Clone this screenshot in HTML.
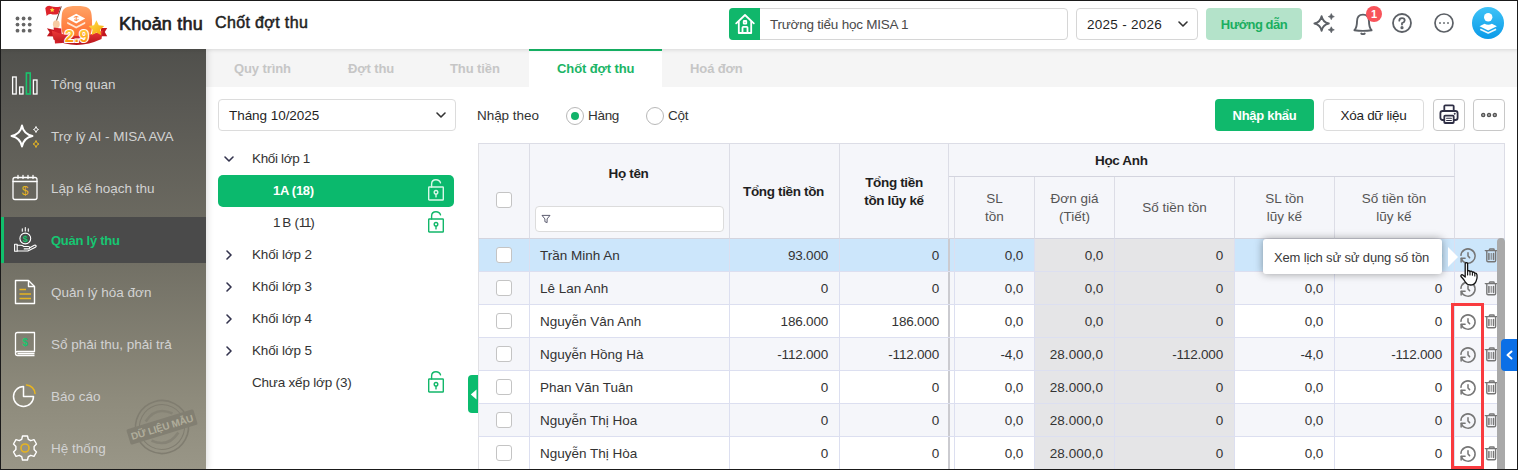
<!DOCTYPE html>
<html lang="vi">
<head>
<meta charset="utf-8">
<title>Chốt đợt thu</title>
<style>
*{box-sizing:border-box;margin:0;padding:0}
html,body{width:1518px;height:470px;overflow:hidden;background:#fff}
body{font-family:"Liberation Sans",sans-serif;font-size:13.5px;color:#1f1f1f;position:relative}
.abs{position:absolute}
#frame{position:absolute;left:0;top:0;width:1518px;height:470px;border:1px solid #1a1a1a;z-index:100;pointer-events:none}
/* header */
#hdr{position:absolute;left:0;top:0;width:1518px;height:49px;background:#fff;box-shadow:0 1px 4px rgba(0,0,0,.12);z-index:5}
#hdr .t1{position:absolute;left:119px;top:14px;font-size:18px;font-weight:400;color:#1f1f1f;letter-spacing:.2px;-webkit-text-stroke:.7px #1f1f1f}
#hdr .t2{position:absolute;left:215px;top:14px;font-size:16px;font-weight:400;color:#1f1f1f;letter-spacing:.37px;-webkit-text-stroke:.5px #1f1f1f}
.inp{position:absolute;top:8px;height:32px;border:1px solid #d6d6d6;border-radius:4px;background:#fff}
/* sidebar */
#side{position:absolute;left:0;top:49px;width:206px;height:421px;box-shadow:2px 0 6px rgba(0,0,0,.12);background:linear-gradient(180deg,#50504c 0%,#5a5954 14%,#727065 51%,#8e8b7c 83%,#999687 100%);z-index:2}
.mi{position:absolute;left:0;width:206px;height:52px;color:#d2d2d2;font-size:13.5px}
.mi span{position:absolute;left:51px;top:19px;white-space:nowrap}
.mi svg{position:absolute;left:9px;top:10px}
.mi.act{color:#16c672;font-weight:700;font-size:13px}
#actbg{position:absolute;left:0;top:168px;width:206px;height:46px;background:#4a4a4a;border-left:4px solid #10c06c}
.mi.act span{left:51px;top:19px;letter-spacing:-.25px}
.mi.act svg{left:9px}
/* tabs */
#tabs{position:absolute;left:206px;top:49px;width:1312px;height:38px;background:#f5f5f5}
#tabs .tb{position:absolute;top:12px;font-size:13px;font-weight:700;color:#c6c6c6;letter-spacing:-.1px;white-space:nowrap}
#tabs .on{position:absolute;left:323px;top:0;width:133px;height:38px;background:#fff;border-top:2px solid #17b868}
#tabs .on span{position:absolute;left:28px;top:10px;font-size:13px;font-weight:700;color:#1bb566;white-space:nowrap;letter-spacing:-.1px}
/* tree */
.tr{position:absolute;font-size:13.5px;color:#333;white-space:nowrap}
/* table */
#tbl{position:absolute;left:478px;top:143px;width:1027px;height:327px;background:#fff}
.hc{position:absolute;background:#f5f6fa;border-right:1px solid #dcdde6;border-bottom:1px solid #d3d4de;color:#555;font-size:13.5px;text-align:center;line-height:22px}
.hc b{color:#1f1f1f;letter-spacing:-.35px;font-size:13.5px}
.row{position:absolute;left:0;width:1027px;height:33px;border-bottom:1px solid #dcdff0}
.row div{position:absolute;top:0;height:32px;border-right:1px solid #dcdff0;line-height:33px;font-size:13.5px;color:#333;text-align:right;padding-right:11px;white-space:nowrap;letter-spacing:-.2px}
.row .nm{text-align:left;padding-left:10px;letter-spacing:0}
.row .g{background:#e5e5e7}
.row.alt{background:#f5f6fa}
.row.sel{background:#cce6fb}
.cb{position:absolute;left:17px;top:8px;width:16px;height:16px;border:1px solid #c4c4c4;border-radius:3px;background:#fff}
.ic{position:absolute;top:8px}
.row .fz{border-right:2px solid #cbcbd0;padding-right:9px}
.row .sp{padding:0}
.row .l8{padding-right:12px}
.row i.cb{display:block}
</style>
</head>
<body>
<!-- HEADER -->
<div id="hdr">
  <svg class="abs" style="left:15px;top:16px" width="18" height="18" viewBox="0 0 18 18" fill="#666"><circle cx="2.5" cy="2.5" r="1.9"/><circle cx="8.6" cy="2.5" r="1.9"/><circle cx="14.7" cy="2.5" r="1.9"/><circle cx="2.5" cy="8.6" r="1.9"/><circle cx="8.6" cy="8.6" r="1.9"/><circle cx="14.7" cy="8.6" r="1.9"/><circle cx="2.5" cy="14.7" r="1.9"/><circle cx="8.6" cy="14.7" r="1.9"/><circle cx="14.7" cy="14.7" r="1.9"/></svg>
  <!-- logo -->
  <svg class="abs" style="left:44px;top:3px" width="66" height="45" viewBox="0 0 66 45">
    <defs>
      <linearGradient id="lg1" x1="0" y1="0" x2="0" y2="1"><stop offset="0" stop-color="#ffa467"/><stop offset="1" stop-color="#ff6a2b"/></linearGradient>
      <linearGradient id="lg2" x1="0" y1="0" x2="0" y2="1"><stop offset="0" stop-color="#ffd84a"/><stop offset="1" stop-color="#ff8a00"/></linearGradient>
      <linearGradient id="lg3" x1="0" y1="0" x2="1" y2="1"><stop offset="0" stop-color="#ffe052"/><stop offset="1" stop-color="#f5a300"/></linearGradient>
      <linearGradient id="lg4" x1="0" y1="0" x2="0" y2="1"><stop offset="0" stop-color="#ee3a38"/><stop offset="1" stop-color="#b5141b"/></linearGradient>
    </defs>
    <path d="M2.900 25.200 L10.500 27 L10.500 33.500 L2.900 33.200 L5.600 29.200Z" fill="#c2161d"/>
    <path d="M57 25 L63.200 25 L60.800 29 L63.200 33.200 L57 33.200Z" fill="#c2161d"/>
    <path d="M32.700 2.900 C44 2.900 47 5 47.600 12 C48.400 20 48.300 26 47 30 C45.500 34 40 35.500 32.700 35.500 C25 35.500 20 34 18.500 30 C17.200 26 17 20 17.800 12 C18.400 5 21.400 2.900 32.700 2.900Z" fill="url(#lg1)"/>
    <path d="M23.200 18.800 L32.200 23.600 L41.200 18.800 L41.200 20.800 L32.200 25.600 L23.200 20.800Z" fill="#ffe6d4"/>
    <path d="M32.200 10.800 L41.200 15.600 L32.200 20.400 L23.200 15.600Z" fill="#fff"/>
    <path d="M29.800 14.400 Q32 12.800 34.400 14 M30 16.800 Q32.400 18.200 34.600 16.600 M32.200 13 V18.200" stroke="#ff7a30" stroke-width=".9" fill="none"/>
    <path d="M17.300 3.400 L12.200 18.500" stroke="#4a3326" stroke-width=".9"/>
    <path d="M1.300 5 Q3.500 2 7 3.200 Q11 4.600 16.600 3.400 L14.200 11 Q10 12 7 11 Q4.500 10.500 2.600 13Z" fill="#de242b"/>
    <path d="M8.200 4.600 l.75 1.500 1.650 .2 -1.200 1.150 .3 1.650 -1.500 -.8 -1.500 .8 .3 -1.650 -1.200 -1.150 1.650 -.2z" fill="#ffd93b"/>
    <ellipse cx="12.300" cy="21.200" rx="3.400" ry="3.900" fill="#f7cba2"/>
    <path d="M9.600 24.500 L17.200 25.600 L18.500 40 L11 40.500Z" fill="#d21f27"/>
    <path d="M7.700 27.600 Q32.700 38.500 58.800 27.600 L57.500 36 Q32.700 47.500 9.500 36.500Z" fill="url(#lg4)"/>
    <path d="M52.400 17.200 l2.350 5 5.450 .7 -4 3.800 1 5.450 -4.800 -2.650 -4.800 2.650 1 -5.450 -4 -3.800 5.450 -.7z" fill="url(#lg3)"/>
    <text x="33" y="39.200" text-anchor="middle" font-family="Liberation Sans, sans-serif" font-size="16.500" font-weight="700" fill="url(#lg2)" stroke="#fff" stroke-width="2.200" paint-order="stroke" letter-spacing=".6">2.9</text>
  </svg>
  <div class="t1">Khoản thu</div>
  <div class="t2">Chốt đợt thu</div>
  <!-- school -->
  <div class="inp" style="left:729px;width:339px"></div>
  <div class="abs" style="left:729px;top:8px;width:31px;height:32px;background:#10b76b;border-radius:4px 0 0 4px"></div>
  <svg class="abs" style="left:735px;top:13px" width="20" height="22" viewBox="0 0 20 22" fill="none" stroke="#fff" stroke-width="1.800" stroke-linejoin="round" stroke-linecap="round"><path d="M1.200 10.300 L10 2 L18.800 10.300"/><path d="M3.800 8.600 V20 H16.200 V8.600"/><path d="M7.500 20 V14.600 Q7.500 13.800 8.300 13.800 H11.700 Q12.500 13.800 12.500 14.600 V20"/><rect x="8.700" y="8" width="2.600" height="2.600" rx=".4"/></svg>
  <div class="abs" style="left:770px;top:17px;font-size:13.5px;color:#4a4a4a;letter-spacing:-.23px">Trường tiểu học MISA 1</div>
  <!-- year -->
  <div class="inp" style="left:1076px;width:122px"></div>
  <div class="abs" style="left:1087px;top:17px;font-size:13.5px;color:#1f1f1f;letter-spacing:.27px">2025 - 2026</div>
  <svg class="abs" style="left:1177px;top:19px" width="12" height="10" viewBox="0 0 12 10" fill="none" stroke="#333" stroke-width="1.6" stroke-linecap="round" stroke-linejoin="round"><path d="M2 3 L6 7 L10 3"/></svg>
  <!-- guide -->
  <div class="abs" style="left:1206px;top:8px;width:96px;height:32px;border-radius:4px;background:#b4e3ca;color:#1bae60;font-weight:700;font-size:13px;text-align:center;line-height:33px;letter-spacing:-.48px">Hướng dẫn</div>
  <!-- sparkle -->
  <svg class="abs" style="left:1312px;top:11px" width="26" height="26" viewBox="0 0 26 26" fill="none" stroke="#5c6066" stroke-width="1.900" stroke-linejoin="round"><path d="M9.600 5.300 Q10.800 11.300 16.800 12.500 Q10.800 13.700 9.600 19.700 Q8.400 13.700 2.400 12.500 Q8.400 11.300 9.600 5.300Z"/><path d="M19.300 2.600 Q19.700 5.200 22.300 5.600 Q19.700 6 19.300 8.600 Q18.900 6 16.300 5.600 Q18.900 5.200 19.300 2.600Z" fill="#5c6066" stroke-width=".7"/><path d="M19.300 15.800 Q19.700 18.400 22.300 18.800 Q19.700 19.200 19.300 21.800 Q18.900 19.200 16.300 18.800 Q18.900 18.400 19.300 15.800Z" fill="#5c6066" stroke-width=".7"/></svg>
  <!-- bell -->
  <svg class="abs" style="left:1351px;top:11px" width="24" height="26" viewBox="0 0 24 26" fill="none" stroke="#5c6066" stroke-width="1.900" stroke-linecap="round" stroke-linejoin="round"><path d="M3.400 19.200 Q6 16.500 6 10.500 Q6 3.600 12 3.600 Q18 3.600 18 10.500 Q18 16.500 20.600 19.200 Q12 20.600 3.400 19.200Z"/><path d="M10.300 22.600 Q12 23.600 13.700 22.600"/></svg>
  <div class="abs" style="left:1366px;top:6px;width:16px;height:16px;border-radius:8px;background:#f8535a;color:#fff;font-size:11px;font-weight:700;text-align:center;line-height:16px">1</div>
  <!-- help -->
  <svg class="abs" style="left:1391px;top:12px" width="22" height="22" viewBox="0 0 22 22" fill="none" stroke="#5c6066" stroke-width="1.800" stroke-linecap="round"><circle cx="11" cy="11" r="9"/><path d="M8.300 8.700 Q8.300 6.200 11 6.200 Q13.700 6.200 13.700 8.500 Q13.700 10 11 11.200 V12.600"/><circle cx="11" cy="15.700" r=".7" fill="#5c6066"/></svg>
  <!-- more -->
  <svg class="abs" style="left:1433px;top:12px" width="22" height="22" viewBox="0 0 22 22" fill="none" stroke="#5c6066" stroke-width="1.700"><circle cx="11" cy="11" r="9"/><circle cx="7" cy="11" r=".5" fill="#5c6066" stroke-width="1"/><circle cx="11" cy="11" r=".5" fill="#5c6066" stroke-width="1"/><circle cx="15" cy="11" r=".5" fill="#5c6066" stroke-width="1"/></svg>
  <!-- avatar -->
  <div class="abs" style="left:1472px;top:7px;width:32px;height:32px;border-radius:16px;background:linear-gradient(180deg,#3fc3f7,#0a9ae8)"></div>
  <svg class="abs" style="left:1472px;top:7px" width="32" height="32" viewBox="0 0 32 32" fill="#fff"><circle cx="16.200" cy="10.300" r="4.200"/><path d="M7.500 19.200 L12.500 16.800 Q16.200 18.800 19.900 16.800 L24.900 19.200 L16.200 23.600Z"/><path d="M8.300 22.200 L16.200 26 L24.100 22.200" fill="none" stroke="#fff" stroke-width="1.700" stroke-linejoin="round" opacity=".92"/></svg>
</div>

<!-- SIDEBAR -->
<div id="side">
  <div class="mi" style="top:9px"><svg width="32" height="32" viewBox="0 0 32 32" fill="none" stroke="#fff" stroke-width="1.3"><rect x="3.6" y="9" width="3.6" height="17"/><rect x="10.6" y="19" width="3.4" height="7"/><rect x="17.4" y="5" width="3.8" height="21" stroke="#19c46d" stroke-width="1.6"/><rect x="24.4" y="12" width="3.6" height="14"/></svg><span>Tổng quan</span></div>
  <div class="mi" style="top:61px"><svg width="32" height="32" viewBox="0 0 32 32" fill="none" stroke="#fff" stroke-width="1.900" stroke-linejoin="round"><path d="M13 5.5 Q14.5 14 23.5 16 Q14.5 18 13 26.500 Q11.500 18 2.500 16 Q11.500 14 13 5.500Z"/><path d="M27 6.500 Q27.300 9 29.500 9.500 Q27.300 10 27 12.500 Q26.700 10 24.500 9.500 Q26.700 9 27 6.500Z" stroke-width="1"/><path d="M27 20.500 Q27.400 23.500 30 24 Q27.400 24.500 27 27.500 Q26.600 24.500 24 24 Q26.600 23.500 27 20.500Z" stroke="#e6b422" stroke-width="1"/></svg><span>Trợ lý AI - MISA AVA</span></div>
  <div class="mi" style="top:113px"><svg style="top:9px" width="32" height="32" viewBox="0 0 32 32" fill="none" stroke="#fff" stroke-width="1.3" stroke-linecap="round"><rect x="4" y="6.500" width="24" height="22" rx="2"/><path d="M4 10.500 H28"/><path d="M9 4.500 V7.500 M14 4.500 V7.500 M19 4.500 V7.500 M24 4.500 V7.500"/><text x="16" y="23.500" text-anchor="middle" font-family="Liberation Sans, sans-serif" font-size="12" font-weight="400" fill="#e6b422" stroke="none">$</text></svg><span>Lập kế hoạch thu</span></div>
  <div id="actbg"></div>
  <div class="mi act" style="top:165px"><svg width="32" height="32" viewBox="0 0 32 32" fill="none" stroke="#fff" stroke-width="1.100" stroke-linecap="round" stroke-linejoin="round"><circle cx="16.300" cy="14.500" r="5.400"/><path d="M13.300 4.800 V7.300 M16.300 3.500 V7 M19.300 4.800 V7.300"/><rect x="5.600" y="20.300" width="2.600" height="7"/><path d="M8.200 21.300 H11.500 Q13.500 21.300 14.800 22.500 H19.300 Q20.800 22.500 20.800 23.700 Q20.800 24.900 19.300 24.900 H15.200"/><path d="M20.800 23.700 L25.300 21.300 Q26.800 20.700 27.200 21.900 Q27.400 22.700 26.400 23.200 L18.800 27 H8.200"/><text x="16.300" y="17.700" text-anchor="middle" font-family="Liberation Sans, sans-serif" font-size="9" font-weight="700" fill="#19c46d" stroke="none">$</text></svg><span>Quản lý thu</span></div>
  <div class="mi" style="top:217px"><svg width="32" height="32" viewBox="0 0 32 32" fill="none" stroke="#fff" stroke-width="1.4" stroke-linejoin="round"><path d="M6.500 4.500 H19.500 L25.500 10.500 V27.500 H6.500Z"/><path d="M19.500 4.500 V10.500 H25.500"/><path d="M10.500 13.500 H17 M10.500 18 H22 M10.500 22.500 H22" stroke="#e6b422" stroke-width="1.5"/></svg><span>Quản lý hóa đơn</span></div>
  <div class="mi" style="top:269px"><svg width="32" height="32" viewBox="0 0 32 32" fill="none" stroke="#fff" stroke-width="1.3" stroke-linejoin="round"><path d="M8.500 4.500 H25.500 V23.500 H8.500 Q6.500 23.500 6.500 25.500 V6.500 Q6.500 4.500 8.500 4.500Z"/><path d="M6.500 25.500 Q6.500 27.500 8.500 27.500 H25.500 M8.500 25.500 H25.500"/><text x="16" y="17.500" text-anchor="middle" font-family="Liberation Sans, sans-serif" font-size="10" font-weight="700" fill="#19c46d" stroke="none">$</text></svg><span>Sổ phải thu, phải trả</span></div>
  <div class="mi" style="top:321px"><svg width="32" height="32" viewBox="0 0 32 32" fill="none" stroke="#fff" stroke-width="1.500" stroke-linecap="round"><path d="M14.500 6.500 A10 10 0 1 0 24.500 16.500 H14.500Z" stroke-linejoin="round"/><path d="M17.500 5 A9 9 0 0 1 26 13.500" stroke="#e6b422"/></svg><span>Báo cáo</span></div>
  <div class="mi" style="top:373px"><svg width="32" height="32" viewBox="0 0 32 32" fill="none" stroke="#fff" stroke-width="1.400" stroke-linejoin="round"><path d="M13.500 4 H18.500 L19.300 7.300 L21.800 8.700 L25 7.700 L27.500 12 L25.100 14.400 V17.600 L27.500 20 L25 24.300 L21.800 23.300 L19.300 24.700 L18.500 28 H13.500 L12.700 24.700 L10.200 23.300 L7 24.300 L4.500 20 L6.900 17.600 V14.400 L4.500 12 L7 7.700 L10.200 8.700 L12.700 7.300Z"/><circle cx="16" cy="16" r="4" stroke="#e6b422" stroke-width="1.600"/></svg><span>Hệ thống</span></div>
  <!-- stamp -->
  <svg class="abs" style="left:122px;top:346px" width="80" height="64" viewBox="0 0 80 64"><g transform="rotate(-17 40 32)" fill="none" stroke="#807d70"><circle cx="40" cy="32" r="26.500" stroke-width="1.600"/><circle cx="40" cy="32" r="22.500" stroke-width="1"/><path d="M26 22 Q40 10 54 22 M26 42 Q40 54 54 42" stroke-width="2.500" opacity=".7"/><rect x="5" y="24" width="70" height="16" rx="1.500" fill="#827f72" stroke="none"/><text x="40" y="35.800" text-anchor="middle" font-family="Liberation Sans, sans-serif" font-size="10" font-weight="700" fill="#b0ad9b" stroke="none" letter-spacing="-.2">DỮ LIỆU MẪU</text></g></svg>
</div>

<!-- TABS -->
<div id="tabs">
  <div class="tb" style="left:28px">Quy trình</div>
  <div class="tb" style="left:142px">Đợt thu</div>
  <div class="tb" style="left:244px">Thu tiền</div>
  <div class="on"><span>Chốt đợt thu</span></div>
  <div class="tb" style="left:484px">Hoá đơn</div>
</div>

<!-- LEFT PANEL -->
<div class="abs" style="left:218px;top:99px;width:238px;height:32px;border:1px solid #dcdcdc;border-radius:4px"></div>
<div class="abs" style="left:229px;top:108px;font-size:13.5px;color:#1f1f1f;letter-spacing:-.05px">Tháng 10/2025</div>
<svg class="abs" style="left:435px;top:110px" width="12" height="10" viewBox="0 0 12 10" fill="none" stroke="#333" stroke-width="1.600" stroke-linecap="round" stroke-linejoin="round"><path d="M2 3 L6 7 L10 3"/></svg>

<svg class="abs" style="left:223px;top:154px" width="12" height="10" viewBox="0 0 12 10" fill="none" stroke="#33334d" stroke-width="1.600" stroke-linecap="round" stroke-linejoin="round"><path d="M2 3 L6 7 L10 3"/></svg>
<div class="tr" style="left:252px;top:151px;letter-spacing:-.35px">Khối lớp 1</div>
<div class="abs" style="left:218px;top:175px;width:236px;height:32px;border-radius:5px;background:#0bb96d"></div>
<div class="tr" style="left:273px;top:183px;color:#fff;font-weight:700;font-size:13px;letter-spacing:-.3px">1A (18)</div>
<div class="tr" style="left:273px;top:215px;letter-spacing:-.3px"><span style="letter-spacing:-1.7px">1</span> B (<span style="letter-spacing:-1.2px">11</span>)</div>
<div class="tr" style="left:252px;top:247px;letter-spacing:-.15px">Khối lớp 2</div>
<div class="tr" style="left:252px;top:279px;letter-spacing:-.15px">Khối lớp 3</div>
<div class="tr" style="left:252px;top:311px;letter-spacing:-.15px">Khối lớp 4</div>
<div class="tr" style="left:252px;top:343px;letter-spacing:-.15px">Khối lớp 5</div>
<div class="tr" style="left:252px;top:375px;letter-spacing:-.2px">Chưa xếp lớp (3)</div>
<svg class="abs" style="left:224px;top:249px" width="10" height="12" viewBox="0 0 10 12" fill="none" stroke="#33334d" stroke-width="1.600" stroke-linecap="round" stroke-linejoin="round"><path d="M3 2 L7 6 L3 10"/></svg>
<svg class="abs" style="left:224px;top:281px" width="10" height="12" viewBox="0 0 10 12" fill="none" stroke="#33334d" stroke-width="1.600" stroke-linecap="round" stroke-linejoin="round"><path d="M3 2 L7 6 L3 10"/></svg>
<svg class="abs" style="left:224px;top:313px" width="10" height="12" viewBox="0 0 10 12" fill="none" stroke="#33334d" stroke-width="1.600" stroke-linecap="round" stroke-linejoin="round"><path d="M3 2 L7 6 L3 10"/></svg>
<svg class="abs" style="left:224px;top:345px" width="10" height="12" viewBox="0 0 10 12" fill="none" stroke="#33334d" stroke-width="1.600" stroke-linecap="round" stroke-linejoin="round"><path d="M3 2 L7 6 L3 10"/></svg>
<!-- locks -->
<svg class="abs lk" style="left:427px;top:178px" width="18" height="24" viewBox="0 0 18 24" fill="none" stroke="#d9f7e8" stroke-width="1.400" stroke-linecap="round"><rect x="1.700" y="9" width="14.600" height="13" rx=".6"/><path d="M4.600 9 V6.200 Q4.600 1.800 9 1.800 Q12.600 1.800 13.500 4.900"/><circle cx="9" cy="14.300" r="1.800"/><path d="M9 16.200 V18.900"/></svg>
<svg class="abs lk" style="left:427px;top:210px" width="18" height="24" viewBox="0 0 18 24" fill="none" stroke="#12b76a" stroke-width="1.400" stroke-linecap="round"><rect x="1.700" y="9" width="14.600" height="13" rx=".6"/><path d="M4.600 9 V6.200 Q4.600 1.800 9 1.800 Q12.600 1.800 13.500 4.900"/><circle cx="9" cy="14.300" r="1.800"/><path d="M9 16.200 V18.900"/></svg>
<svg class="abs lk" style="left:427px;top:370px" width="18" height="24" viewBox="0 0 18 24" fill="none" stroke="#12b76a" stroke-width="1.400" stroke-linecap="round"><rect x="1.700" y="9" width="14.600" height="13" rx=".6"/><path d="M4.600 9 V6.200 Q4.600 1.800 9 1.800 Q12.600 1.800 13.500 4.900"/><circle cx="9" cy="14.300" r="1.800"/><path d="M9 16.200 V18.900"/></svg>

<!-- TOOLBAR -->
<div class="abs" style="left:477px;top:108px;font-size:13.5px;color:#333;letter-spacing:-.05px">Nhập theo</div>
<div class="abs" style="left:566px;top:106.500px;width:18px;height:18px;border:1px solid #b8b8b8;border-radius:9px;background:#fff"></div>
<div class="abs" style="left:571px;top:111.500px;width:8px;height:8px;border-radius:4px;background:#12b36a"></div>
<div class="abs" style="left:588px;top:108px;font-size:13.5px;color:#333;letter-spacing:-.3px">Hàng</div>
<div class="abs" style="left:646px;top:106.500px;width:18px;height:18px;border:1px solid #b8b8b8;border-radius:9px;background:#fff"></div>
<div class="abs" style="left:668px;top:108px;font-size:13.5px;color:#333;letter-spacing:-.2px">Cột</div>

<div class="abs" style="left:1215px;top:99px;width:99px;height:32px;border-radius:4px;background:#10b96c;color:#fff;font-weight:700;font-size:13px;text-align:center;line-height:33px;letter-spacing:-.29px">Nhập khẩu</div>
<div class="abs" style="left:1323px;top:99px;width:101px;height:32px;border-radius:4px;border:1px solid #dcdcdc;background:#fff;color:#1f1f1f;font-size:13.5px;text-align:center;line-height:31px;letter-spacing:-.28px">Xóa dữ liệu</div>
<div class="abs" style="left:1433px;top:99px;width:32px;height:32px;border-radius:4px;border:1px solid #c8c8c8;background:#fff"></div>
<svg class="abs" style="left:1438px;top:103px" width="22" height="24" viewBox="0 0 22 24" fill="none" stroke="#2f2f45" stroke-width="1.800" stroke-linejoin="round" stroke-linecap="round"><path d="M6.300 8 V3.300 Q6.300 2.300 7.300 2.300 H14.700 Q15.700 2.300 15.700 3.300 V8"/><rect x="2.400" y="8" width="17.200" height="9" rx="2.300"/><rect x="6.300" y="12.600" width="9.400" height="7.400" rx=".8" fill="#fff"/><path d="M8.600 15.300 H13.400 M8.600 17.500 H13.400" stroke-width="1.100"/><circle cx="16.600" cy="10.800" r=".5" fill="#2f2f45" stroke-width=".8"/></svg>
<div class="abs" style="left:1473px;top:99px;width:32px;height:32px;border-radius:4px;border:1px solid #c8c8c8;background:#fff"></div>
<svg class="abs" style="left:1479px;top:111px" width="20" height="8" viewBox="0 0 20 8" fill="#aaa" stroke="#555" stroke-width="1.300"><circle cx="4.200" cy="4" r="1.600"/><circle cx="10" cy="4" r="1.600"/><circle cx="15.800" cy="4" r="1.600"/></svg>

<!-- TABLE -->
<div id="tbl">
  <div class="hc" style="left:0;top:0;width:52px;height:96px;border-left:1px solid #e0e0e4;border-top:1px solid #dcdde6"><div class="cb" style="left:17px;top:48px"></div></div>
  <div class="hc" style="left:52px;top:0;width:200px;height:96px;border-top:1px solid #dcdde6"><b style="position:absolute;left:-1px;width:100%;top:19px">Họ tên</b>
    <div class="abs" style="left:5px;top:62px;width:189px;height:26px;border:1px solid #dcdcdc;border-radius:4px;background:#fff"></div>
    <svg class="abs" style="left:11px;top:70px" width="10" height="10" viewBox="0 0 10 10" fill="none" stroke="#4a4a60" stroke-width=".9" stroke-linejoin="round"><path d="M1 1.400 H9 L6.100 4.900 V8.600 L3.900 7.700 V4.900Z"/></svg>
  </div>
  <div class="hc" style="left:252px;top:0;width:110px;height:96px;border-top:1px solid #dcdde6"><b style="position:absolute;left:-1px;width:100%;top:37px">Tổng tiền tồn</b></div>
  <div class="hc" style="left:362px;top:0;width:109px;height:96px;border-top:1px solid #dcdde6;line-height:18px"><b style="position:absolute;left:0;width:100%;top:30px">Tổng tiền<br>tồn lũy kế</b></div>
  <div class="hc" style="left:471px;top:0;width:506px;height:34px;border-top:1px solid #dcdde6"><b style="position:absolute;left:146px;top:6px;white-space:nowrap">Học Anh</b></div>
  <div class="hc" style="left:471px;top:34px;width:6px;height:62px"></div>
  <div class="hc" style="left:477px;top:34px;width:80px;height:62px;line-height:18px;padding-top:13px">SL<br>tồn</div>
  <div class="hc" style="left:557px;top:34px;width:80px;height:62px;line-height:18px;padding-top:13px">Đơn giá<br>(Tiết)</div>
  <div class="hc" style="left:637px;top:34px;width:120px;height:62px;line-height:62px">Số tiền tồn</div>
  <div class="hc" style="left:757px;top:34px;width:100px;height:62px;line-height:18px;padding-top:13px">SL tồn<br>lũy kế</div>
  <div class="hc" style="left:857px;top:34px;width:120px;height:62px;line-height:18px;padding-top:13px;padding-right:1px">Số tiền tồn<br>lũy kế</div>
  <div class="hc" style="left:977px;top:0;width:50px;height:96px;border-top:1px solid #dcdde6"></div>
</div>
<!--ROWS-->
<div id="rows" class="abs" style="left:478px;top:239px;width:1027px;height:232px">
<div class="row sel" style="top:0px"><div style="left:0;width:52px;border-left:1px solid #e0e0e4"><i class="cb"></i></div><div class="nm" style="left:52px;width:200px">Trần Minh An</div><div style="left:252px;width:110px">93.000</div><div class="fz" style="left:362px;width:110px">0</div><div class="sp" style="left:472px;width:5px"></div><div style="left:477px;width:80px">0,0</div><div class="g" style="left:557px;width:80px">0,0</div><div class="g" style="left:637px;width:120px">0</div><div style="left:757px;width:100px">0,0</div><div class="l8" style="left:857px;width:120px">0</div><div style="left:977px;width:50px;border-right:none"></div><svg class="ic" style="left:978px;top:5px" width="24" height="24" viewBox="0 0 24 24" fill="none" stroke="#767676" stroke-width="1.5" stroke-linecap="round" stroke-linejoin="round"><path d="M4.93 11.3 A7.1 7.1 0 1 1 5.3 14.4"/><path d="M5.15 18 V14.35 H9.1"/><path d="M12 8.7 V12 L13.6 13.6"/></svg><svg class="ic" style="left:1006px;top:8px" width="14" height="17" viewBox="0 0 14 17" fill="none" stroke="#767676" stroke-width="1.4" stroke-linecap="round" stroke-linejoin="round"><path d="M5.4 3.3 V2.6 Q5.4 2 6 2 H9.5 Q10.1 2 10.1 2.6 V3.3"/><path d="M1.3 3.6 H12.6"/><path d="M2.8 3.6 V13.5 Q2.8 14.8 4.1 14.8 H10.3 Q11.6 14.8 11.6 13.5 V3.6"/><path d="M4.9 6.4 V12.4 M9.5 6.4 V12.4" stroke-width="1.5"/><path d="M7.2 6.4 V12.4" stroke-width="1"/></svg></div>
<div class="row alt" style="top:33px"><div style="left:0;width:52px;border-left:1px solid #e0e0e4"><i class="cb"></i></div><div class="nm" style="left:52px;width:200px">Lê Lan Anh</div><div style="left:252px;width:110px">0</div><div class="fz" style="left:362px;width:110px">0</div><div class="sp" style="left:472px;width:5px"></div><div style="left:477px;width:80px">0,0</div><div class="g" style="left:557px;width:80px">0,0</div><div class="g" style="left:637px;width:120px">0</div><div style="left:757px;width:100px">0,0</div><div class="l8" style="left:857px;width:120px">0</div><div style="left:977px;width:50px;border-right:none"></div><svg class="ic" style="left:978px;top:5px" width="24" height="24" viewBox="0 0 24 24" fill="none" stroke="#767676" stroke-width="1.5" stroke-linecap="round" stroke-linejoin="round"><path d="M4.93 11.3 A7.1 7.1 0 1 1 5.3 14.4"/><path d="M5.15 18 V14.35 H9.1"/><path d="M12 8.7 V12 L13.6 13.6"/></svg><svg class="ic" style="left:1006px;top:8px" width="14" height="17" viewBox="0 0 14 17" fill="none" stroke="#767676" stroke-width="1.4" stroke-linecap="round" stroke-linejoin="round"><path d="M5.4 3.3 V2.6 Q5.4 2 6 2 H9.5 Q10.1 2 10.1 2.6 V3.3"/><path d="M1.3 3.6 H12.6"/><path d="M2.8 3.6 V13.5 Q2.8 14.8 4.1 14.8 H10.3 Q11.6 14.8 11.6 13.5 V3.6"/><path d="M4.9 6.4 V12.4 M9.5 6.4 V12.4" stroke-width="1.5"/><path d="M7.2 6.4 V12.4" stroke-width="1"/></svg></div>
<div class="row" style="top:66px"><div style="left:0;width:52px;border-left:1px solid #e0e0e4"><i class="cb"></i></div><div class="nm" style="left:52px;width:200px">Nguyễn Vân Anh</div><div style="left:252px;width:110px">186.000</div><div class="fz" style="left:362px;width:110px">186.000</div><div class="sp" style="left:472px;width:5px"></div><div style="left:477px;width:80px">0,0</div><div class="g" style="left:557px;width:80px">0,0</div><div class="g" style="left:637px;width:120px">0</div><div style="left:757px;width:100px">0,0</div><div class="l8" style="left:857px;width:120px">0</div><div style="left:977px;width:50px;border-right:none"></div><svg class="ic" style="left:978px;top:5px" width="24" height="24" viewBox="0 0 24 24" fill="none" stroke="#767676" stroke-width="1.5" stroke-linecap="round" stroke-linejoin="round"><path d="M4.93 11.3 A7.1 7.1 0 1 1 5.3 14.4"/><path d="M5.15 18 V14.35 H9.1"/><path d="M12 8.7 V12 L13.6 13.6"/></svg><svg class="ic" style="left:1006px;top:8px" width="14" height="17" viewBox="0 0 14 17" fill="none" stroke="#767676" stroke-width="1.4" stroke-linecap="round" stroke-linejoin="round"><path d="M5.4 3.3 V2.6 Q5.4 2 6 2 H9.5 Q10.1 2 10.1 2.6 V3.3"/><path d="M1.3 3.6 H12.6"/><path d="M2.8 3.6 V13.5 Q2.8 14.8 4.1 14.8 H10.3 Q11.6 14.8 11.6 13.5 V3.6"/><path d="M4.9 6.4 V12.4 M9.5 6.4 V12.4" stroke-width="1.5"/><path d="M7.2 6.4 V12.4" stroke-width="1"/></svg></div>
<div class="row alt" style="top:99px"><div style="left:0;width:52px;border-left:1px solid #e0e0e4"><i class="cb"></i></div><div class="nm" style="left:52px;width:200px">Nguyễn Hồng Hà</div><div style="left:252px;width:110px">-112.000</div><div class="fz" style="left:362px;width:110px">-112.000</div><div class="sp" style="left:472px;width:5px"></div><div style="left:477px;width:80px">-4,0</div><div class="g" style="left:557px;width:80px;letter-spacing:.1px">28.000,0</div><div class="g" style="left:637px;width:120px">-112.000</div><div style="left:757px;width:100px">-4,0</div><div class="l8" style="left:857px;width:120px">-112.000</div><div style="left:977px;width:50px;border-right:none"></div><svg class="ic" style="left:978px;top:5px" width="24" height="24" viewBox="0 0 24 24" fill="none" stroke="#767676" stroke-width="1.5" stroke-linecap="round" stroke-linejoin="round"><path d="M4.93 11.3 A7.1 7.1 0 1 1 5.3 14.4"/><path d="M5.15 18 V14.35 H9.1"/><path d="M12 8.7 V12 L13.6 13.6"/></svg><svg class="ic" style="left:1006px;top:8px" width="14" height="17" viewBox="0 0 14 17" fill="none" stroke="#767676" stroke-width="1.4" stroke-linecap="round" stroke-linejoin="round"><path d="M5.4 3.3 V2.6 Q5.4 2 6 2 H9.5 Q10.1 2 10.1 2.6 V3.3"/><path d="M1.3 3.6 H12.6"/><path d="M2.8 3.6 V13.5 Q2.8 14.8 4.1 14.8 H10.3 Q11.6 14.8 11.6 13.5 V3.6"/><path d="M4.9 6.4 V12.4 M9.5 6.4 V12.4" stroke-width="1.5"/><path d="M7.2 6.4 V12.4" stroke-width="1"/></svg></div>
<div class="row" style="top:132px"><div style="left:0;width:52px;border-left:1px solid #e0e0e4"><i class="cb"></i></div><div class="nm" style="left:52px;width:200px">Phan Văn Tuân</div><div style="left:252px;width:110px">0</div><div class="fz" style="left:362px;width:110px">0</div><div class="sp" style="left:472px;width:5px"></div><div style="left:477px;width:80px">0,0</div><div class="g" style="left:557px;width:80px;letter-spacing:.1px">28.000,0</div><div class="g" style="left:637px;width:120px">0</div><div style="left:757px;width:100px">0,0</div><div class="l8" style="left:857px;width:120px">0</div><div style="left:977px;width:50px;border-right:none"></div><svg class="ic" style="left:978px;top:5px" width="24" height="24" viewBox="0 0 24 24" fill="none" stroke="#767676" stroke-width="1.5" stroke-linecap="round" stroke-linejoin="round"><path d="M4.93 11.3 A7.1 7.1 0 1 1 5.3 14.4"/><path d="M5.15 18 V14.35 H9.1"/><path d="M12 8.7 V12 L13.6 13.6"/></svg><svg class="ic" style="left:1006px;top:8px" width="14" height="17" viewBox="0 0 14 17" fill="none" stroke="#767676" stroke-width="1.4" stroke-linecap="round" stroke-linejoin="round"><path d="M5.4 3.3 V2.6 Q5.4 2 6 2 H9.5 Q10.1 2 10.1 2.6 V3.3"/><path d="M1.3 3.6 H12.6"/><path d="M2.8 3.6 V13.5 Q2.8 14.8 4.1 14.8 H10.3 Q11.6 14.8 11.6 13.5 V3.6"/><path d="M4.9 6.4 V12.4 M9.5 6.4 V12.4" stroke-width="1.5"/><path d="M7.2 6.4 V12.4" stroke-width="1"/></svg></div>
<div class="row alt" style="top:165px"><div style="left:0;width:52px;border-left:1px solid #e0e0e4"><i class="cb"></i></div><div class="nm" style="left:52px;width:200px">Nguyễn Thị Hoa</div><div style="left:252px;width:110px">0</div><div class="fz" style="left:362px;width:110px">0</div><div class="sp" style="left:472px;width:5px"></div><div style="left:477px;width:80px">0,0</div><div class="g" style="left:557px;width:80px;letter-spacing:.1px">28.000,0</div><div class="g" style="left:637px;width:120px">0</div><div style="left:757px;width:100px">0,0</div><div class="l8" style="left:857px;width:120px">0</div><div style="left:977px;width:50px;border-right:none"></div><svg class="ic" style="left:978px;top:5px" width="24" height="24" viewBox="0 0 24 24" fill="none" stroke="#767676" stroke-width="1.5" stroke-linecap="round" stroke-linejoin="round"><path d="M4.93 11.3 A7.1 7.1 0 1 1 5.3 14.4"/><path d="M5.15 18 V14.35 H9.1"/><path d="M12 8.7 V12 L13.6 13.6"/></svg><svg class="ic" style="left:1006px;top:8px" width="14" height="17" viewBox="0 0 14 17" fill="none" stroke="#767676" stroke-width="1.4" stroke-linecap="round" stroke-linejoin="round"><path d="M5.4 3.3 V2.6 Q5.4 2 6 2 H9.5 Q10.1 2 10.1 2.6 V3.3"/><path d="M1.3 3.6 H12.6"/><path d="M2.8 3.6 V13.5 Q2.8 14.8 4.1 14.8 H10.3 Q11.6 14.8 11.6 13.5 V3.6"/><path d="M4.9 6.4 V12.4 M9.5 6.4 V12.4" stroke-width="1.5"/><path d="M7.2 6.4 V12.4" stroke-width="1"/></svg></div>
<div class="row" style="top:198px"><div style="left:0;width:52px;border-left:1px solid #e0e0e4"><i class="cb"></i></div><div class="nm" style="left:52px;width:200px">Nguyễn Thị Hòa</div><div style="left:252px;width:110px">0</div><div class="fz" style="left:362px;width:110px">0</div><div class="sp" style="left:472px;width:5px"></div><div style="left:477px;width:80px">0,0</div><div class="g" style="left:557px;width:80px;letter-spacing:.1px">28.000,0</div><div class="g" style="left:637px;width:120px">0</div><div style="left:757px;width:100px">0,0</div><div class="l8" style="left:857px;width:120px">0</div><div style="left:977px;width:50px;border-right:none"></div><svg class="ic" style="left:978px;top:5px" width="24" height="24" viewBox="0 0 24 24" fill="none" stroke="#767676" stroke-width="1.5" stroke-linecap="round" stroke-linejoin="round"><path d="M4.93 11.3 A7.1 7.1 0 1 1 5.3 14.4"/><path d="M5.15 18 V14.35 H9.1"/><path d="M12 8.7 V12 L13.6 13.6"/></svg><svg class="ic" style="left:1006px;top:8px" width="14" height="17" viewBox="0 0 14 17" fill="none" stroke="#767676" stroke-width="1.4" stroke-linecap="round" stroke-linejoin="round"><path d="M5.4 3.3 V2.6 Q5.4 2 6 2 H9.5 Q10.1 2 10.1 2.6 V3.3"/><path d="M1.3 3.6 H12.6"/><path d="M2.8 3.6 V13.5 Q2.8 14.8 4.1 14.8 H10.3 Q11.6 14.8 11.6 13.5 V3.6"/><path d="M4.9 6.4 V12.4 M9.5 6.4 V12.4" stroke-width="1.5"/><path d="M7.2 6.4 V12.4" stroke-width="1"/></svg></div>
</div>
<!--/ROWS-->

<!-- OVERLAYS -->
<div class="abs" style="left:1497px;top:238px;width:8px;height:232px;background:#a9a9a9;border-radius:4px 4px 0 0;z-index:6"></div>
<div class="abs" style="left:1451px;top:303px;width:33px;height:166px;border:3px solid #f93b3f;z-index:7"></div>
<div class="abs" style="left:1263px;top:239px;width:179px;height:35px;background:#fff;border-radius:3px;box-shadow:0 0 9px rgba(0,0,0,.38);z-index:8;font-size:13px;color:#3a3a3a;line-height:37px;padding-left:11px;white-space:nowrap;letter-spacing:-.15px">Xem lịch sử sử dụng số tồn</div>
<svg class="abs" style="left:1448px;top:247px;z-index:8" width="10" height="20" viewBox="0 0 10 20"><path d="M0 0 L10 10 L0 20Z" fill="#fff"/></svg>
<!-- cursor -->
<svg class="abs" style="left:1459px;top:261px;z-index:9" width="21" height="26" viewBox="0 0 21 26"><path d="M6.200 2.300 Q7.400 .8 8.600 2.300 V10.200 Q9.800 9 11 10.500 Q12.400 9.600 13.400 11.200 Q15 10.500 15.800 12.200 Q17.500 11.800 18 13.800 Q18.600 17.500 17 20.500 Q15.500 24 11.500 24 Q8 24 6.300 21 Q4.500 18 2 15.500 Q1.500 13.500 3.500 13.800 L6.200 16Z" fill="#fff" stroke="#111" stroke-width="1.300" stroke-linejoin="round"/><path d="M8.600 10.200 V14 M11 10.800 V14 M13.400 11.600 V14.300 M15.800 12.600 V15" stroke="#111" stroke-width="1.100" stroke-linecap="round"/></svg>
<!-- side handles -->
<div class="abs" style="left:468px;top:375px;width:10px;height:38px;background:#0bbb6e;border-radius:4px 0 0 4px;z-index:6"></div>
<svg class="abs" style="left:470px;top:389px;z-index:7" width="7" height="11" viewBox="0 0 7 11"><path d="M6.500 .5 L.8 5.500 L6.500 10.500Z" fill="#fff"/></svg>
<div class="abs" style="left:1501px;top:339px;width:17px;height:32px;background:#0b6fe6;border-radius:4px 0 0 4px;z-index:6"></div>
<svg class="abs" style="left:1505px;top:350px;z-index:7" width="9" height="10" viewBox="0 0 9 10" fill="none" stroke="#fff" stroke-width="2" stroke-linecap="round" stroke-linejoin="round"><path d="M6.500 1.500 L2.500 5 L6.500 8.500"/></svg>

<div id="frame"></div>
</body>
</html>
